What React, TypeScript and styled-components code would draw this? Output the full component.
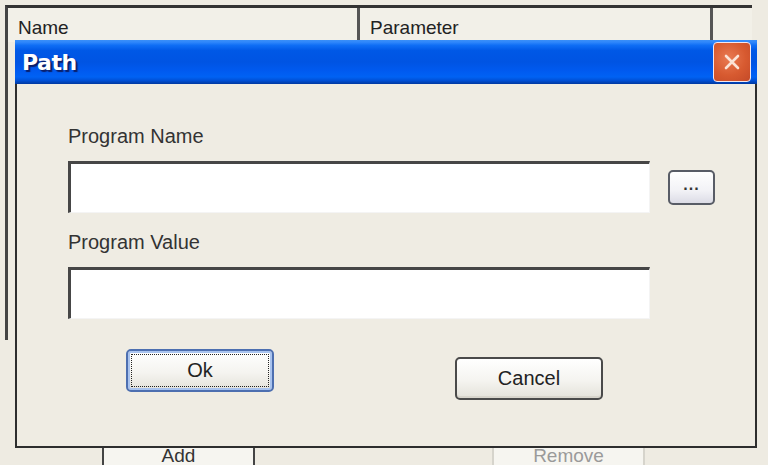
import styled, { createGlobalStyle } from "styled-components";

const GlobalStyle = createGlobalStyle`
  body {
    margin: 0;
    background: #eeebe2;
    font-family: "Liberation Sans", Arial, sans-serif;
  }
`;

const Screen = styled.div`
  position: relative;
  width: 768px;
  height: 465px;
  overflow: hidden;
  padding: 5px 0 0 5px;
  box-sizing: border-box;
  background: #eeebe2;
`;

const ListPanel = styled.div`
  width: 747px;
  height: 335px;
  border-top: 3px solid #333;
  border-left: 3px solid #444;
  box-sizing: border-box;
`;

const HeaderRow = styled.div`
  display: grid;
  grid-template-columns: 352px 353px 1fr;
  height: 34px;
  background: #f2f0e8;
`;

const HeaderCell = styled.div<{ $last?: boolean }>`
  display: flex;
  align-items: center;
  padding: 6px 0 0 10px;
  font-size: 19px;
  color: #222;
  border-right: ${(p) => (p.$last ? "none" : "3px solid #555")};
`;

const BottomRow = styled.div`
  display: flex;
  margin-top: 102px;
  padding-left: 97px;
  gap: 237px;
`;

const FlatButton = styled.div<{ $disabled?: boolean }>`
  width: 153px;
  height: 30px;
  box-sizing: border-box;
  padding-top: 3px;
  text-align: center;
  font-size: 19px;
  line-height: 22px;
  background: #f6f5f0;
  color: ${(p) => (p.$disabled ? "#9a9a9a" : "#333")};
  border-left: 2px solid ${(p) => (p.$disabled ? "#d6d4cc" : "#444")};
  border-right: 2px solid ${(p) => (p.$disabled ? "#d6d4cc" : "#444")};
`;

const Dialog = styled.div`
  position: absolute;
  left: 15px;
  top: 40px;
  width: 742px;
  height: 408px;
  display: flex;
  flex-direction: column;
  background: #efece3;
  border: 2px solid #2e2e2e;
  border-top: none;
  box-sizing: border-box;
`;

const TitleBar = styled.div`
  display: flex;
  align-items: center;
  justify-content: space-between;
  height: 44px;
  margin: 0 -2px;
  padding: 0 6px 0 7px;
  background: linear-gradient(
    to bottom,
    #3a8ff8 0%,
    #2f87fb 5%,
    #0f6ef5 12%,
    #0058e6 24%,
    #0054e3 50%,
    #005af0 70%,
    #0062f4 84%,
    #0050d6 92%,
    #0038a0 100%
  );
`;

const Title = styled.div`
  font-family: "DejaVu Sans", "Liberation Sans", sans-serif;
  font-weight: bold;
  font-size: 22px;
  letter-spacing: -0.5px;
  color: #fff;
  text-shadow: 2px 2px 1px #0a1f6a;
`;

const CloseButton = styled.div`
  width: 38px;
  height: 40px;
  display: flex;
  align-items: center;
  justify-content: center;
  box-sizing: border-box;
  border: 1.5px solid #f2e6ee;
  border-radius: 4px;
  background: radial-gradient(circle at 40% 40%, #e97a52 0%, #d75a30 55%, #c44a28 100%);
`;

const Body = styled.div`
  display: flex;
  flex-direction: column;
  padding: 40px 0 0 51px;
`;

const Label = styled.div<{ $gap?: number }>`
  font-size: 20px;
  line-height: 24px;
  color: #333;
  margin-top: ${(p) => p.$gap ?? 0}px;
  margin-bottom: 13px;
`;

const FieldRow = styled.div`
  display: flex;
  align-items: center;
  gap: 18px;
`;

const TextBox = styled.input`
  width: 582px;
  height: 52px;
  box-sizing: border-box;
  border: none;
  border-top: 3px solid #464646;
  border-left: 3px solid #464646;
  border-right: 1px solid #f4f4f4;
  border-bottom: 1px solid #f4f4f4;
  background: #fff;
  outline: none;
  font-family: inherit;
  font-size: 18px;
`;

const BrowseButton = styled.button`
  width: 47px;
  height: 35px;
  box-sizing: border-box;
  border: 2px solid #585c66;
  border-radius: 5px;
  background: linear-gradient(to bottom, #ffffff 0%, #f2f2f6 60%, #dcdce6 100%);
  color: #333;
  font-family: inherit;
  font-size: 16px;
  font-weight: bold;
  padding: 0 0 4px;
  letter-spacing: 1px;
`;

const ActionRow = styled.div`
  display: flex;
  align-items: flex-start;
  padding-left: 58px;
  margin-top: 30px;
  gap: 181px;
`;

const ActionButton = styled.button<{ $default?: boolean; $offset?: number }>`
  width: 148px;
  height: 43px;
  margin-top: ${(p) => p.$offset ?? 0}px;
  box-sizing: border-box;
  border: 2px solid ${(p) => (p.$default ? "#4d6fb0" : "#4a4a4a")};
  border-radius: 5px;
  background: linear-gradient(to bottom, #ffffff 0%, #f5f4f0 55%, #e4e2da 100%);
  box-shadow: ${(p) =>
    p.$default ? "inset 0 0 0 2px #a9c3ee" : "inset 0 -2px 0 #d8d5cc"};
  color: #222;
  font-family: inherit;
  font-size: 20px;
  padding: 0;
  outline: ${(p) => (p.$default ? "1px dotted #222" : "none")};
  outline-offset: -6px;
`;

export default function App() {
  return (
    <>
      <GlobalStyle />
      <Screen>
        <ListPanel>
          <HeaderRow>
            <HeaderCell>Name</HeaderCell>
            <HeaderCell>Parameter</HeaderCell>
            <HeaderCell $last />
          </HeaderRow>
        </ListPanel>
        <BottomRow>
          <FlatButton>Add</FlatButton>
          <FlatButton $disabled>Remove</FlatButton>
        </BottomRow>

        <Dialog>
          <TitleBar>
            <Title>Path</Title>
            <CloseButton>
              <svg width="20" height="20" viewBox="0 0 20 20">
                <path
                  d="M4 4 L16 16 M16 4 L4 16"
                  stroke="#fbe3d6"
                  strokeWidth="2.6"
                  strokeLinecap="round"
                />
              </svg>
            </CloseButton>
          </TitleBar>
          <Body>
            <Label>Program Name</Label>
            <FieldRow>
              <TextBox />
              <BrowseButton>...</BrowseButton>
            </FieldRow>
            <Label $gap={17}>Program Value</Label>
            <FieldRow>
              <TextBox />
            </FieldRow>
            <ActionRow>
              <ActionButton $default>Ok</ActionButton>
              <ActionButton $offset={8}>Cancel</ActionButton>
            </ActionRow>
          </Body>
        </Dialog>
      </Screen>
    </>
  );
}
